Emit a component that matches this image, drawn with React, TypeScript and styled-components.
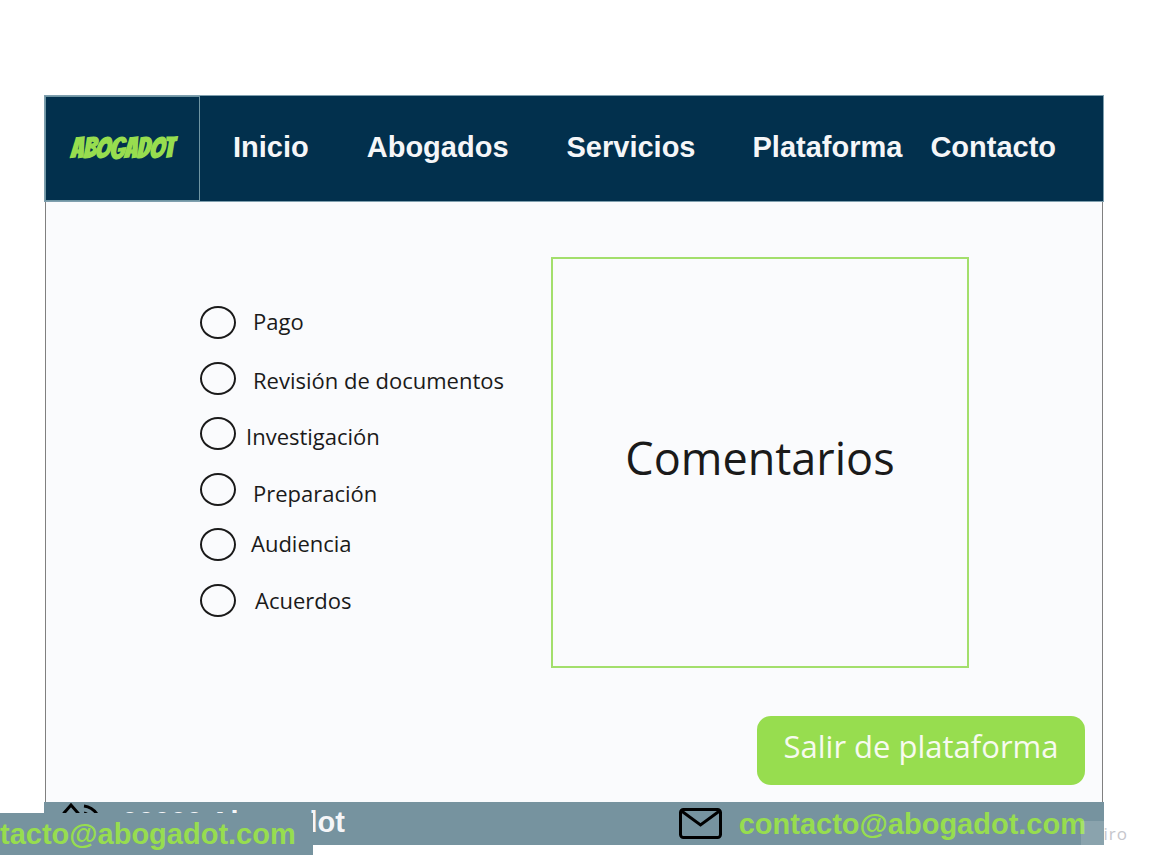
import React from "react";
import styled, { createGlobalStyle } from "styled-components";

const GlobalStyle = createGlobalStyle`
  * { box-sizing: border-box; }
  body {
    margin: 0;
    background: #ffffff;
    font-family: "Open Sans", sans-serif;
    color: #1a1a1a;
    overflow-x: hidden;
  }
`;

const arial = `"Liberation Sans", Arial, sans-serif`;

const Page = styled.div`
  position: relative;
  padding: 95px 48px 22px 44px;
`;

const Frame = styled.div`
  display: flex;
  flex-direction: column;
`;

const Header = styled.header`
  display: flex;
  align-items: stretch;
  height: 107px;
  background: #02304d;
  border: 1px solid #7f9fae;
`;

const Logo = styled.a`
  display: flex;
  align-items: center;
  justify-content: center;
  width: 155px;
  flex: none;
  padding-bottom: 2px;
  border: 1px solid #6f95a3;
  color: #97dd4f;
  font: 700 29px "Bangers", Roboto, sans-serif;
  text-decoration: none;
`;

const Nav = styled.nav`
  display: flex;
  align-items: center;
  padding: 0 0 4px 33px;
`;

const NavLink = styled.a<{ $gap: number }>`
  margin-right: ${(p) => p.$gap}px;
  font: 700 29px/32px ${arial};
  color: #f5f6f8;
  text-decoration: none;
`;

const Main = styled.main`
  display: flex;
  flex-direction: column;
  height: 600px;
  margin: 0 1px;
  padding: 55px 17px 17px 154px;
  background: #fafbfd;
  border: solid #808080;
  border-width: 0 1px;
`;

const Columns = styled.div`
  display: flex;
  align-items: flex-start;
`;

const Steps = styled.fieldset`
  display: flex;
  flex-direction: column;
  justify-content: space-between;
  flex: none;
  width: 351px;
  height: 360px;
  margin: 0;
  padding: 49px 0 0;
  border: 0;
`;

const Step = styled.label<{ $indent: number; $drop: number }>`
  display: flex;
  align-items: center;
  height: 33px;
  gap: ${(p) => p.$indent}px;
  font-size: 22px;
  line-height: 30px;

  span {
    padding: ${(p) => p.$drop}px 0 4px;
  }
`;

const Radio = styled.input`
  appearance: none;
  flex: none;
  width: 36px;
  height: 33px;
  margin: 0;
  border: 2px solid #1a1a1a;
  border-radius: 50%;

  &:checked {
    background: #97dd4f;
  }
`;

const Comments = styled.section`
  display: flex;
  align-items: center;
  justify-content: center;
  width: 418px;
  height: 411px;
  padding-bottom: 10px;
  border: 2px solid #a3df6c;
`;

const Title = styled.h1`
  margin: 0;
  font-size: 45px;
  line-height: 64px;
  font-weight: 400;
`;

const ExitButton = styled.button`
  align-self: flex-end;
  margin-top: auto;
  width: 328px;
  height: 69px;
  padding: 0 0 10px;
  border: 0;
  border-radius: 14px;
  background: #97dd4f;
  color: #f7faf0;
  font: 400 31px "Open Sans", sans-serif;
`;

const Footer = styled.footer`
  display: flex;
  justify-content: space-between;
  height: 43px;
  padding: 0 18px;
  background: #76939f;
`;

const Contact = styled.div`
  display: flex;
  align-items: center;
  gap: 17px;
`;

const Phone = styled.span`
  display: flex;
  align-items: flex-start;
  gap: 22px;
  padding-top: 4px;
  font: 700 29px/32px ${arial};
  color: #f5f6f8;

  svg {
    overflow: visible;
  }
`;

const MailLink = styled.a`
  font: 700 29px/32px ${arial};
  color: #97dd4f;
  text-decoration: none;
`;

const FloatingMail = styled.div`
  position: absolute;
  left: 0;
  bottom: 12px;
  width: 313px;
  height: 42px;
  padding-top: 5px;
  background: #76939f;
`;

const Watermark = styled.div`
  position: absolute;
  right: 24px;
  bottom: 22px;
  width: 47px;
  height: 24px;
  background: linear-gradient(90deg, rgba(255, 255, 255, 0.15) 23px, transparent 23px);
  font: 400 17px/26px "Open Sans", sans-serif;
  letter-spacing: 1px;
  color: #c6c6cc;
  text-align: right;
`;

const NAV = [
  { label: "Inicio", gap: 58 },
  { label: "Abogados", gap: 58 },
  { label: "Servicios", gap: 57 },
  { label: "Plataforma", gap: 28 },
  { label: "Contacto", gap: 0 },
];

const STEPS = [
  { label: "Pago", indent: 17, drop: 0 },
  { label: "Revisión de documentos", indent: 17, drop: 7 },
  { label: "Investigación", indent: 10, drop: 9 },
  { label: "Preparación", indent: 17, drop: 11 },
  { label: "Audiencia", indent: 15, drop: 0 },
  { label: "Acuerdos", indent: 19, drop: 4 },
];

export default function App() {
  return (
    <>
      <GlobalStyle />
      <Page>
        <Frame>
          <Header>
            <Logo href="#">ABOGADOT</Logo>
            <Nav>
              {NAV.map((n) => (
                <NavLink key={n.label} href="#" $gap={n.gap}>
                  {n.label}
                </NavLink>
              ))}
            </Nav>
          </Header>
          <Main>
            <Columns>
              <Steps>
                {STEPS.map((s) => (
                  <Step key={s.label} $indent={s.indent} $drop={s.drop}>
                    <Radio type="radio" name="step" />
                    <span>{s.label}</span>
                  </Step>
                ))}
              </Steps>
              <Comments>
                <Title>Comentarios</Title>
              </Comments>
            </Columns>
            <ExitButton type="button">Salir de plataforma</ExitButton>
          </Main>
          <Footer>
            <Phone>
              <svg width="38" height="34" viewBox="0 0 38 34" fill="none" stroke="#000" strokeWidth="3">
                <path d="M2 7 L9 -1 L16 7 L12 13 Q16 21 24 24 L29 20 L36 26 L31 32 Q4 30 2 7Z" />
                <path d="M22 0 Q30 1 35 8 M22 7 Q26 8 29 12" />
              </svg>
              00000 Abogadot
            </Phone>
            <Contact>
              <svg width="43" height="31" viewBox="0 0 43 31" fill="none" stroke="#000" strokeWidth="3">
                <rect x="1.5" y="1.5" width="40" height="28" rx="3" />
                <path d="M2.5 3 L21.5 17 L40.5 3" />
              </svg>
              <MailLink href="mailto:contacto@abogadot.com">contacto@abogadot.com</MailLink>
            </Contact>
          </Footer>
        </Frame>
        <FloatingMail>
          <MailLink href="mailto:contacto@abogadot.com">tacto@abogadot.com</MailLink>
        </FloatingMail>
        <Watermark>iro</Watermark>
      </Page>
    </>
  );
}
